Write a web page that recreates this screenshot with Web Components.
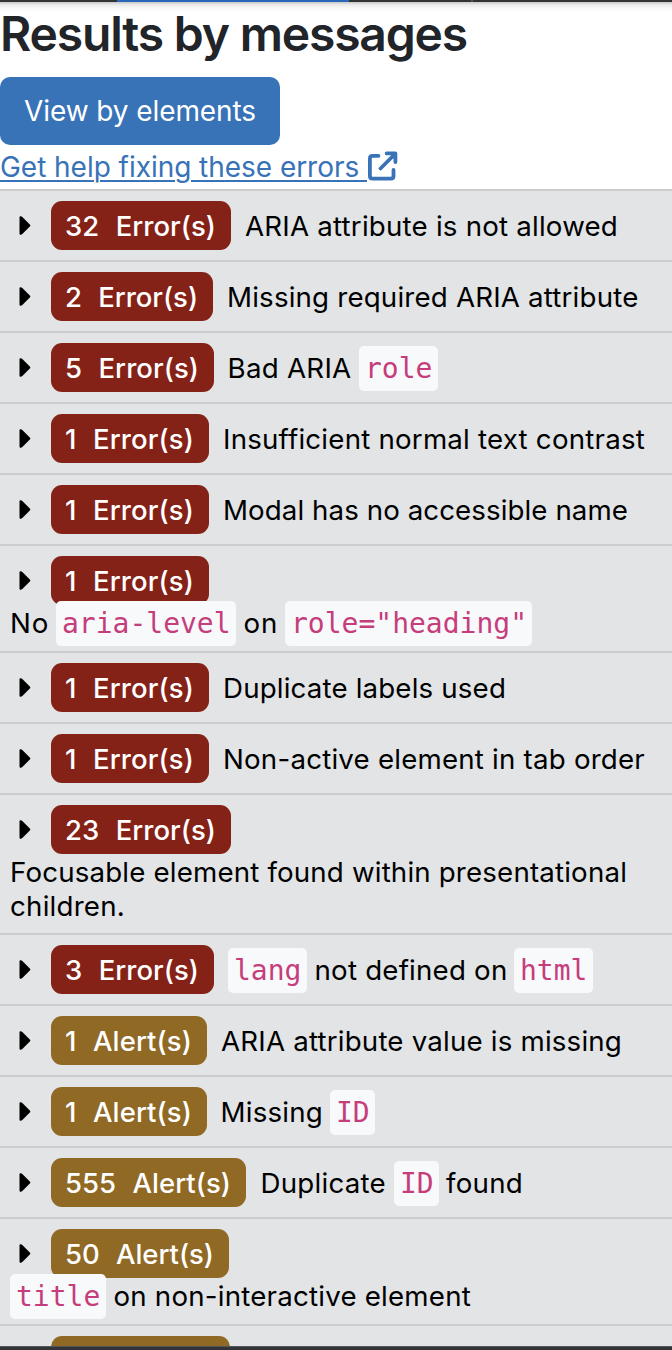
<!DOCTYPE html>
<html lang="en">
<head>
<meta charset="utf-8">
<title>Results by messages</title>
<style>
html,body{margin:0;height:1350px;overflow:hidden;background:#fff}
body{font-family:Inter,"Noto Sans",sans-serif;color:#000;font-optical-sizing:none}
</style>
</head>
<body>
<results-panel></results-panel>
<script>
// Text run that spreads or tightens its letters to fill the width in its "w" attribute.
class FitText extends HTMLElement {
  connectedCallback() {
    const root = this.attachShadow({mode: 'open'});
    root.innerHTML = `<style>:host{display:block;flex:none;white-space:pre;width:${this.getAttribute('w')}px}</style><span><slot></slot></span>`;
    const span = root.querySelector('span');
    const n = this.textContent.length;
    const fit = () => {
      span.style.letterSpacing = '0px';
      const natural = span.getBoundingClientRect().width;
      span.style.letterSpacing = ((+this.getAttribute('w') - natural) / n) + 'px';
    };
    fit();
  }
}
customElements.define('fit-text', FitText);

class CodeChip extends HTMLElement {
  connectedCallback() {
    this.attachShadow({mode: 'open'}).innerHTML = `<style>
      :host{display:block;flex:none;box-sizing:border-box;height:45px;line-height:46px;padding:0 0 0 6px;border-radius:5px;
      background:#f8f9fb;color:#c63d7c;font-family:"DejaVu Sans Mono",monospace;font-size:28px;white-space:pre;position:relative;top:1px}
      :host([flush]){top:0}
      </style><slot></slot>`;
  }
}
customElements.define('code-chip', CodeChip);

class CountBadge extends HTMLElement {
  connectedCallback() {
    const w = +this.getAttribute('w');
    this.attachShadow({mode: 'open'}).innerHTML = `<style>
      :host{display:flex;flex:none;box-sizing:border-box;width:${w}px;height:49px;padding-left:14px;border-radius:11px;
      background:#852218;color:#fff;font-size:27.5px;line-height:51px;font-weight:450;word-spacing:.8px}
      :host([kind=alert]){background:#906925}
      </style><fit-text w="${w - 29}">${this.getAttribute('label')}</fit-text>`;
  }
}
customElements.define('count-badge', CountBadge);

class MessageRow extends HTMLElement {
  set data(d) {
    const [height, kind, label, badgeWidth, lines, below] = d;
    const line = parts => {
      let at = parts.from;
      return parts.items.map(([type, x, end, text]) => {
        const m = x - at; at = end;
        return type === 'c' ? `<code-chip ${below ? 'flush' : ''} style="margin-left:${m}px;width:${end - x}px">${text}</code-chip>`
          : `<fit-text style="margin-left:${m}px" w="${end - x}">${text}</fit-text>`;
      }).join('');
    };
    this.attachShadow({mode: 'open'}).innerHTML = `<style>
      :host{display:block;box-sizing:border-box;height:${height}px;border-top:2px solid #cbccce;background:#e2e4e6;padding-top:10px;font-size:27.7px}
      .summary{display:flex;align-items:center;height:49px;line-height:47px}
      svg{display:block;flex:none;margin:0 20px 0 19px}
      .line{display:flex;align-items:center;height:34px;line-height:32px}
      .summary fit-text{padding-top:2px}
      .below{padding-top:1px;position:relative}
      </style>
      <div class="summary"><svg width="12" height="20" viewBox="0 0 12 20"><path d="M2 .3Q.5-.2.5 1.5V17.5Q.5 19.2 2 18.7L3.3 18 10.8 10.5Q11.8 9.5 10.8 8.5L3.3 1Z"/></svg>
      <count-badge kind="${kind}" w="${badgeWidth}" label="${label}"></count-badge>${below ? '' : line({from: 51 + badgeWidth, items: lines})}</div>
      ${below ? '<div class="below">' + lines.map(l => `<div class="line">${line({from: 0, items: l})}</div>`).join('') + '</div>' : ''}`;
  }
}
customElements.define('message-row', MessageRow);

class ResultsPanel extends HTMLElement {
  connectedCallback() {
    this.attachShadow({mode: 'open'}).innerHTML = `<style>
      :host{display:flex;flex-direction:column;height:1350px;overflow:hidden}
      .bar{flex:none;height:2px;background:linear-gradient(90deg,#333 117px,#2867b8 117px 349px,#333 349px 471px,#555 471px 473px,#333 473px)}
      header{flex:none;height:187px;background:linear-gradient(#c8c8c8,#ededed 3px,#fafafa 7px,#fff 12px)}
      h1{margin:0;height:75px;box-sizing:border-box;padding:8px 0 0 0;font-size:48px;line-height:48px;font-weight:560;color:#212429;font-optical-sizing:auto}
      button{display:flex;box-sizing:border-box;width:280px;height:68px;border:0;border-radius:10px;background:#3872b7;color:#fff;font:430 28px/69px Inter,sans-serif;font-optical-sizing:none;padding:0 0 0 24px}
      a{display:flex;height:42px;line-height:44px;font-size:28px;color:#3872b7;text-decoration:none}
      a fit-text{text-decoration:underline;text-decoration-thickness:2px;text-underline-offset:3px}
      a svg{margin-top:6px;margin-left:1px}
      .list{flex:1;min-height:0;overflow:hidden;background:#e2e4e6}
      .foot{flex:none;height:4px;background:linear-gradient(#55565a 1px,#333438 1px)}
      </style>
      <div class="bar"></div>
      <header><h1><fit-text w="467">Results by messages</fit-text></h1>
      <button><fit-text w="232">View by elements</fit-text></button>
      <a href="#"><fit-text w="367">Get help fixing these errors </fit-text><svg width="30" height="30" viewBox="0 0 30 30" fill="none" stroke="#3872b7" stroke-width="3.8" stroke-linecap="round" stroke-linejoin="round"><path d="M10.5 4.8H4.5Q1.9 4.8 1.9 7.4V25Q1.9 27.6 4.5 27.6H22.9Q25.5 27.6 25.5 25V19M12.5 17.5 27 3M18.7 2.4H27.4V11"/></svg></a></header>
      <div class="list"></div><div class="foot"></div>`;
    const rows = [
      [71,'error','32  Error(s)',180,[['t',245,618,'ARIA attribute is not allowed']]],
      [71,'error','2  Error(s)',162,[['t',227,638.5,'Missing required ARIA attribute']]],
      [71,'error','5  Error(s)',163,[['t',227.5,351.5,'Bad ARIA'],['c',359,438,'role']]],
      [71,'error','1  Error(s)',158,[['t',223,645,'Insufficient normal text contrast']]],
      [71,'error','1  Error(s)',158,[['t',223,628,'Modal has no accessible name']]],
      [107,'error','1  Error(s)',158,[[['t',10,49,'No'],['c',56,236,'aria-level'],['t',243.5,278.5,'on'],['c',285,532,'role="heading"']]],true],
      [71,'error','1  Error(s)',158,[['t',223,506,'Duplicate labels used']]],
      [71,'error','1  Error(s)',158,[['t',223,645,'Non-active element in tab order']]],
      [140,'error','23  Error(s)',180,[[['t',10,627,'Focusable element found within presentational']],[['t',10,125,'children.']]],true],
      [71,'error','3  Error(s)',163,[['c',228,307,'lang'],['t',314.5,507.5,'not defined on'],['c',514,593,'html']]],
      [71,'alert','1  Alert(s)',156,[['t',221,622,'ARIA attribute value is missing']]],
      [71,'alert','1  Alert(s)',156,[['t',220.5,323,'Missing'],['c',330,375,'ID']]],
      [71,'alert','555  Alert(s)',195,[['t',260.5,386,'Duplicate'],['c',394,439,'ID'],['t',446,523,'found']]],
      [107,'alert','50  Alert(s)',178,[[['c',10,106,'title'],['t',113.5,471,'on non-interactive element']]],true],
      [71,'alert','',179,[]]
    ];
    const list = this.shadowRoot.querySelector('.list');
    for (const r of rows) {
      const row = document.createElement('message-row');
      row.data = r;
      list.append(row);
    }
  }
}
customElements.define('results-panel', ResultsPanel);
</script>
</body>
</html>
